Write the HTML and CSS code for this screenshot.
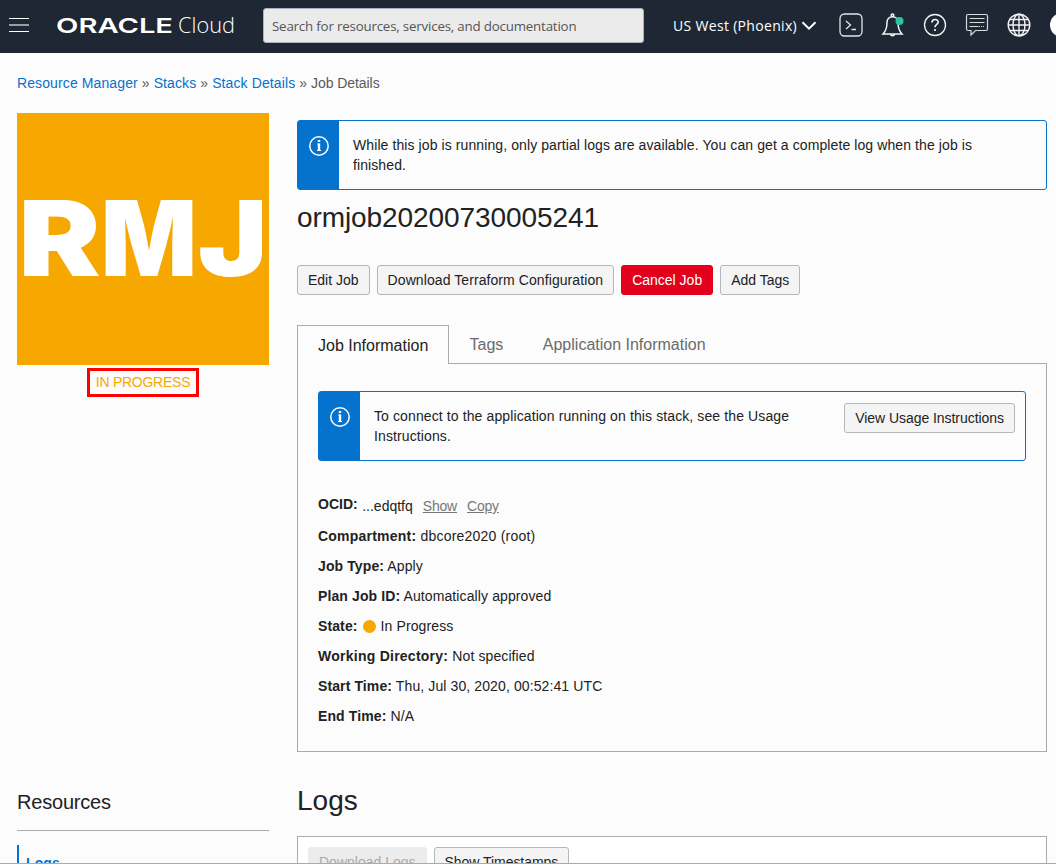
FILE: index.html
```html
<!DOCTYPE html>
<html lang="en">
<head>
<meta charset="utf-8">
<title>Job Details | Oracle Cloud</title>
<link rel="stylesheet" href="styles.css">
</head>
<body>
<div class="page">
  <header class="topbar">
    <svg class="menu" width="20" height="16" viewBox="0 0 20 16"><path d="M0 1.500h20M0 14.500h20" stroke="#fff"/><path d="M0 8h20" stroke="#999ca0" stroke-width="2"/></svg>
    <svg class="brand" width="184" height="38" viewBox="0 0 184 38" fill="#fff">
      <text class="brand-name" x="-1" y="25" textLength="117" lengthAdjust="spacingAndGlyphs">ORACLE</text>
      <text class="brand-sub" x="121" y="25" textLength="57" lengthAdjust="spacingAndGlyphs">Cloud</text>
    </svg>
    <div class="search">Search for resources, services, and documentation</div>
    <div class="region"><span class="region-name">US West (Phoenix)</span>
      <svg width="16" height="10" viewBox="0 0 16 10" fill="none" stroke="#fff" stroke-width="2"><path d="M1.500 1.200 8 7.700l6.500-6.500"/></svg>
    </div>
    <nav class="tools">
      <svg width="24" height="24" viewBox="0 0 24 24" fill="none" stroke="#e4e6e8" stroke-width="1.300"><rect x="1" y="1" width="22" height="22" rx="4.500"/><path d="m7 8 4.500 4L7 16M12.500 16.500h4.500"/></svg>
      <svg width="24" height="24" viewBox="0 0 24 24" fill="none" stroke="#f2f3f4" stroke-width="1.500"><circle cx="11.500" cy="2.200" r="1.300"/><path d="M6 9.500C6 6 8.300 3.800 11.500 3.800S17 6 17 9.500c0 6 1 8.500 4 11.500H2c3-3 4-5.500 4-11.500ZM9.500 21.300c.3 2 3.700 2 4 0"/><circle cx="18.500" cy="8" r="4" fill="#2fc4a0" stroke="none"/></svg>
      <svg width="24" height="24" viewBox="0 0 24 24" fill="none" stroke="#f2f3f4" stroke-width="1.300"><circle cx="12" cy="12" r="10.500"/><path stroke-width="1.700" d="M9 9.500c0-4 6.200-3.800 6.200-.4 0 2.300-3.200 2.200-3.200 5.100M12 16v2"/></svg>
      <svg width="24" height="24" viewBox="0 0 24 24" fill="none" stroke="#d7dadc" stroke-width="1.200"><path d="M3 1.500h18q1.500 0 1.500 1.500v13q0 1.500-1.500 1.500H10.500L6 22v-4.500H3Q1.500 17.500 1.500 16V3Q1.500 1.500 3 1.500ZM4.500 5.500h15M4.500 9.500h15M4.500 13.500h9"/><path stroke-dasharray="1 1" d="M14 13.500h6"/></svg>
      <svg width="24" height="24" viewBox="0 0 24 24" fill="none" stroke="#f2f3f4" stroke-width="1.400"><circle cx="12" cy="12" r="10.800"/><ellipse cx="12" cy="12" rx="6" ry="10.800"/><path d="M12 1v22M1 12h22M3 6.500h18M3 17.500h18"/></svg>
      <svg width="24" height="24" viewBox="0 0 24 24"><circle cx="13" cy="12" r="12" fill="#fff"/></svg>
    </nav>
  </header>

  <nav class="crumbs"><a>Resource Manager</a> » <a>Stacks</a> » <a>Stack Details</a> » <span class="here">Job Details</span></nav>

  <div class="columns">
    <aside class="side">
      <svg class="tile" width="252" height="252" viewBox="0 0 252 252">
        <text x="1.500" y="163" textLength="82" lengthAdjust="spacingAndGlyphs">R</text>
        <text x="84" y="163" textLength="96" lengthAdjust="spacingAndGlyphs">M</text>
        <text x="181" y="163" textLength="69.500" lengthAdjust="spacingAndGlyphs">J</text>
      </svg>
      <div class="status">IN PROGRESS</div>
      <h2 class="side-title">Resources</h2>
      <a class="side-link">Logs</a>
    </aside>

    <main class="main">
      <section class="notice">
        <div class="notice-mark"><svg width="20" height="20" viewBox="0 0 20 20" fill="none" stroke="#fff"><circle cx="10" cy="10" r="9.200" stroke-width="1.500"/><path stroke-width="2.400" d="M10 4v2M10 7.500v7"/><path d="M8.300 8h2M8 14.500h4"/></svg></div>
        <p class="notice-text">While this job is running, only partial logs are available. You can get a complete log when the job is<br>finished.</p>
      </section>
      <h1 class="title"><span class="title-text">ormjob20200730005241</span></h1>
      <div class="actions">
        <button class="btn">Edit Job</button>
        <button class="btn download">Download Terraform Configuration</button>
        <button class="btn danger">Cancel Job</button>
        <button class="btn">Add Tags</button>
      </div>
      <div class="tabs">
        <div class="tab active">Job Information</div>
        <div class="tab">Tags</div>
        <div class="tab">Application Information</div>
      </div>
      <section class="panel">
        <div class="notice">
          <div class="notice-mark"><svg width="20" height="20" viewBox="0 0 20 20" fill="none" stroke="#fff"><circle cx="10" cy="10" r="9.200" stroke-width="1.500"/><path stroke-width="2.400" d="M10 4v2M10 7.500v7"/><path d="M8.300 8h2M8 14.500h4"/></svg></div>
          <p class="notice-text wide">To connect to the application running on this stack, see the Usage<br>Instructions.</p>
          <button class="btn usage">View Usage Instructions</button>
        </div>
        <div class="facts">
          <div class="fact ocid"><b>OCID:</b><span class="ocid-value">...edqtfq</span><u>Show</u><u>Copy</u></div>
          <div class="fact loose"><b>Compartment:</b> dbcore2020 (root)</div>
          <div class="fact"><b>Job Type:</b> Apply</div>
          <div class="fact"><b>Plan Job ID:</b> Automatically approved</div>
          <div class="fact"><b>State:</b> <i class="dot"></i> In Progress</div>
          <div class="fact"><b class="spread">Working Directory:</b> Not specified</div>
          <div class="fact"><b>Start Time:</b> Thu, Jul 30, 2020, 00:52:41 UTC</div>
          <div class="fact"><b>End Time:</b> N/A</div>
        </div>
      </section>
      <h2 class="logs-title">Logs</h2>
      <div class="logs">
        <button class="btn disabled">Download Logs</button>
        <button class="btn stamps">Show Timestamps</button>
      </div>
    </main>
  </div>
</div>
</body>
</html>
```
FILE: styles.css
```css
* { box-sizing: border-box; }
body { margin: 0; background: #fff; }
.page { height: 864px; overflow: hidden; background: #fcfcfc; border-bottom: 1px solid #a9abb2; font: 14px/20px "Liberation Sans", Arial, sans-serif; letter-spacing: 0.08px; color: #222; }
.topbar { display: flex; height: 53px; background: #1e2733; overflow: hidden; }
.topbar > * { flex: none; }
.menu { margin: 17px 0 0 9px; }
.brand { margin: 8px -4px 0 28px; overflow: visible; }
.brand-name { font: 600 20.600px Inter, sans-serif; letter-spacing: 0; }
.brand-sub { font: 300 22px "Open Sans", sans-serif; letter-spacing: 0; }
.search { width: 381px; height: 35px; margin: 8px 0 0 26px; padding-left: 8px; background: #ebebeb; border: 1px solid #aab3bd; border-radius: 3px; color: #555; font: 13.300px/34px "Open Sans", sans-serif; letter-spacing: -0.18px; }
.region { display: flex; margin-left: 29px; width: 166px; color: #fff; font: 14px/51px "Open Sans", sans-serif; letter-spacing: 0.32px; }
.region-name { width: 128px; white-space: nowrap; }
.region svg { margin-top: 21px; }
.tools { display: flex; gap: 18px; padding-top: 13px; }
.tools svg { flex: none; }
.crumbs { height: 60px; padding: 20px 17px 0; color: #5a5a5a; white-space: nowrap; }
.crumbs a { color: #0572ce; letter-spacing: 0.11px; }
.here { letter-spacing: -0.07px; }
.columns { display: grid; grid-template-columns: 252px 750px; column-gap: 28px; padding-left: 17px; }
.side { display: flex; flex-direction: column; }
.tile { display: block; background: #f6a800; }
.tile text { font: 900 104.500px Inter, sans-serif; fill: #fff; letter-spacing: 0; }
.status { align-self: center; width: 112px; height: 29px; margin-top: 3px; border: 3px solid #f00; color: #f6a800; text-align: center; line-height: 23px; letter-spacing: -0.25px; white-space: nowrap; }
.side-title { height: 52px; margin: 382px 0 0; padding-top: 11px; border-bottom: 1px solid #a9abb2; font-size: 20px; line-height: 24px; font-weight: 400; letter-spacing: -0.2px; }
.side-link { margin-top: 14px; height: 36px; padding-left: 7px; border-left: 2px solid #0572ce; color: #0572ce; font-weight: 700; line-height: 36px; }
.main { padding-top: 7px; }
.notice { display: flex; height: 70px; border: 1px solid #0572ce; border-radius: 3px; }
.notice-mark { flex: none; width: 41px; background: #0572ce; padding: 15px 0 0 11px; }
.notice-text { flex: 1; margin: 14px 0 0 14px; letter-spacing: 0.095px; white-space: nowrap; }
.notice-text.wide { letter-spacing: 0.11px; }
.title { margin: 10px 0 0; height: 65px; font-size: 28px; line-height: 36px; font-weight: 400; letter-spacing: -0.08px; }
.actions { display: flex; gap: 7px; }
.btn { height: 30px; padding: 0 10px; border: 1px solid #b3b8bf; border-radius: 3px; background: #f4f4f4; color: #222; font: inherit; letter-spacing: 0; white-space: nowrap; }
.download { letter-spacing: 0.08px; }
.danger { background: #e4001d; border-color: #e4001d; color: #fff; }
.disabled { background: #ececec; border-color: #ececec; color: #aaa; }
.stamps { letter-spacing: -0.04px; }
.tabs { display: flex; height: 39px; margin-top: 30px; font-size: 16px; letter-spacing: 0; color: #6b6b6b; }
.tab { padding: 10px 19px 0 20.500px; white-space: nowrap; }
.tab.active { position: relative; width: 152px; padding: 10px 0 0 20px; border: 1px solid #a9abab; border-bottom: 0; background: #fcfcfc; color: #222; }
.panel { height: 389px; margin-top: -1px; padding: 27px 20px 0; border: 1px solid #a9abab; }
.usage { margin: 11px 10px 0 0; letter-spacing: -0.05px; }
.facts { padding-top: 30px; }
.fact { height: 30px; line-height: 30px; letter-spacing: 0.11px; white-space: pre; }
.loose { letter-spacing: 0.22px; }
.spread { letter-spacing: 0.25px; }
.fact.ocid { display: flex; height: 30px; line-height: 27px; letter-spacing: 0; }
.ocid-value { margin: 2px 10px 0 4.500px; }
.ocid u { margin: 2px 10px 0 0; color: #777; letter-spacing: -0.2px; }
.dot { display: inline-block; width: 13px; height: 13px; margin: 0 1px; border-radius: 50%; background: #f6a800; vertical-align: -2px; }
.logs-title { height: 84px; margin: 0; padding-top: 31px; font-size: 28px; line-height: 36px; font-weight: 400; letter-spacing: 0; }
.logs { display: flex; gap: 7px; height: 120px; padding: 10px; border: 1px solid #a9abb2; background: #fff; }
```
